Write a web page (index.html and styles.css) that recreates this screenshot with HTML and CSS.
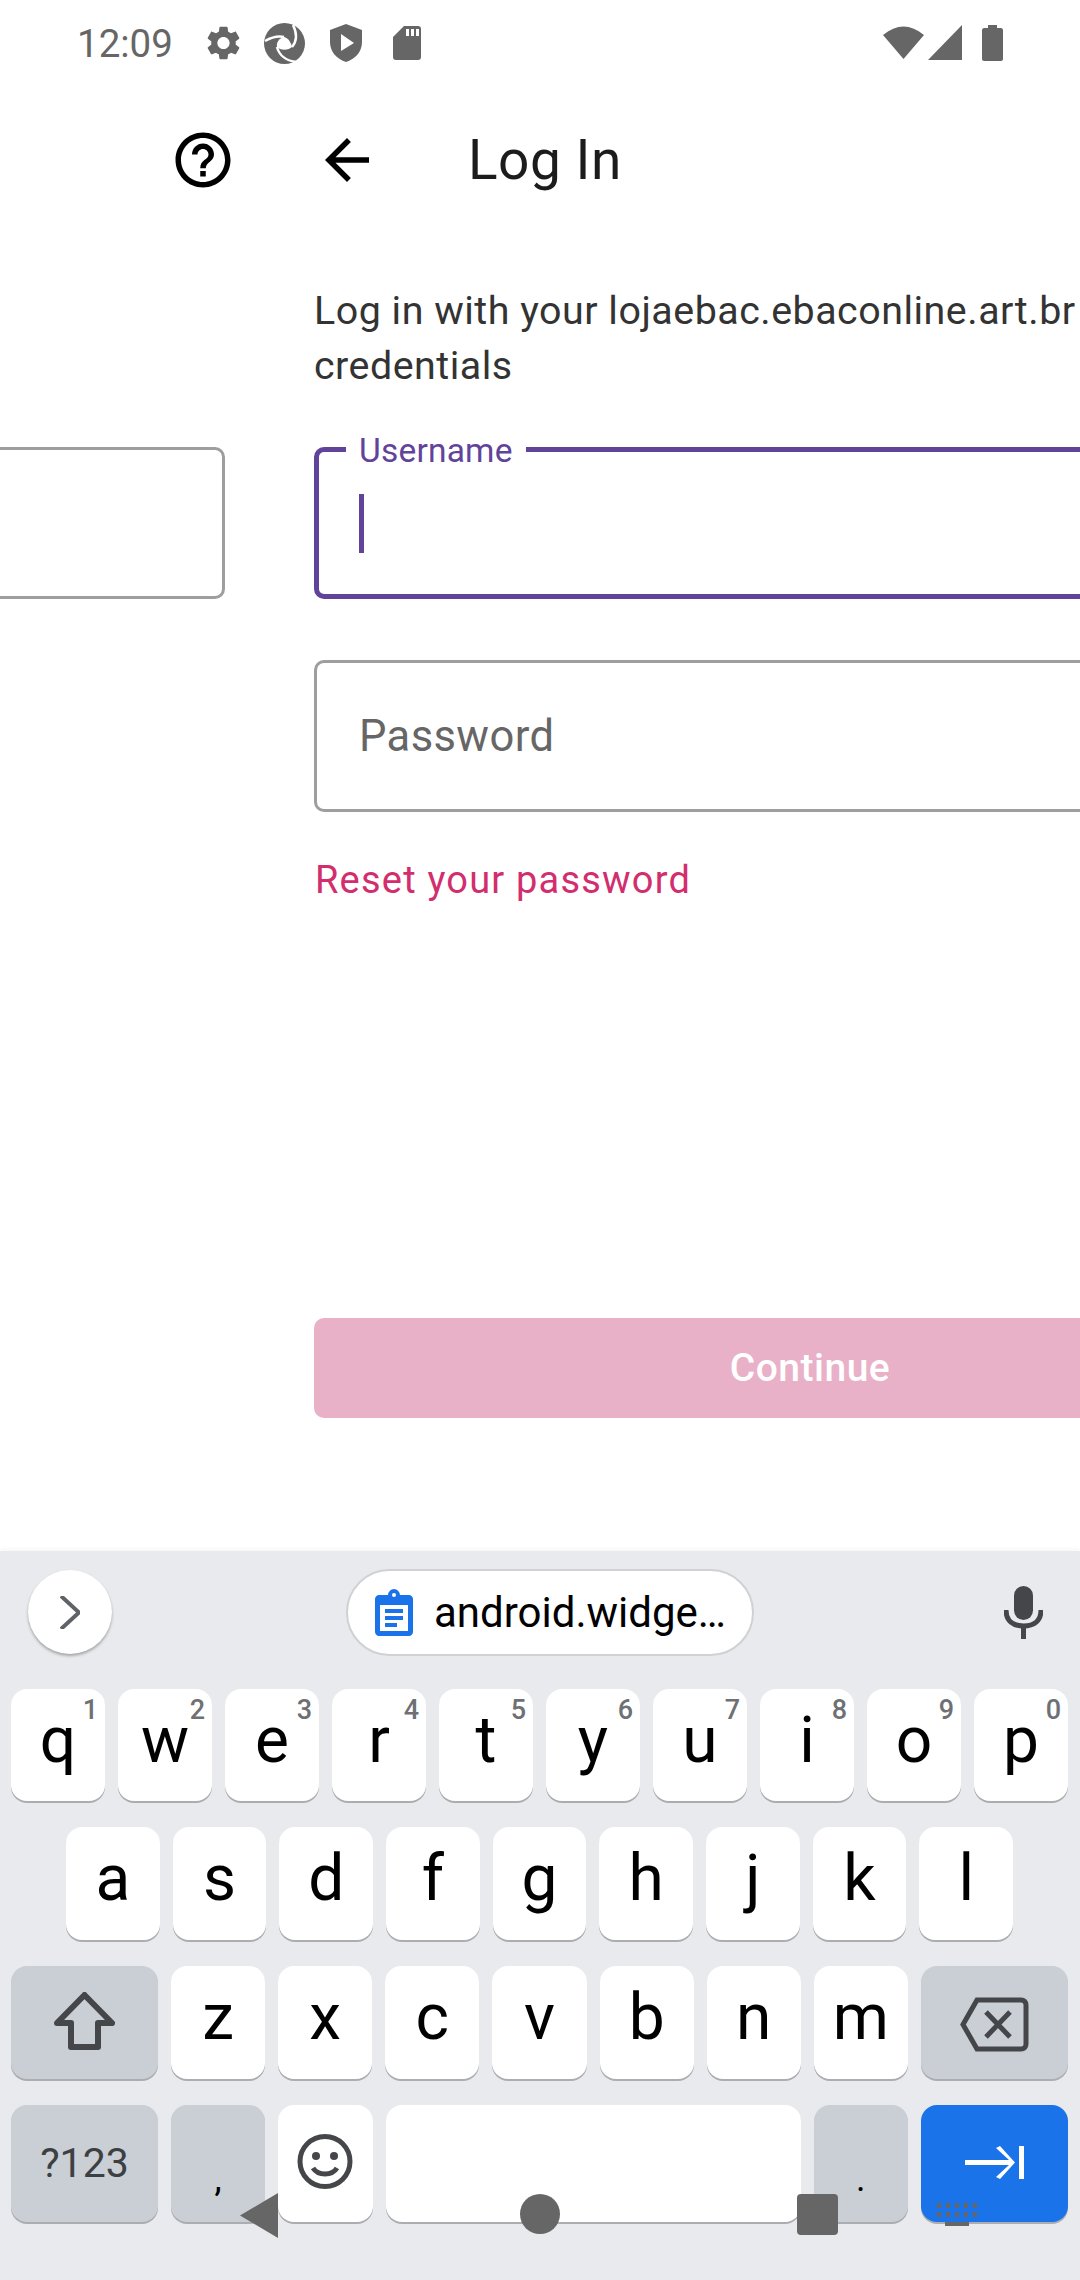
FILE: index.html
```html
<!DOCTYPE html>
<html lang="en">
<head>
  <meta charset="UTF-8" />
  <meta name="viewport" content="width=device-width, initial-scale=1.0"/>
  <title>Log In</title>
  <link rel="stylesheet" href="styles.css">
</head>
<body>
  <div class="status-bar">
    <span class="time">12:09</span>
    <svg class="st-gear" viewBox="2.5 2 19 20"><path d="M19.14 12.94c.04-.3.06-.61.06-.94 0-.32-.02-.64-.07-.94l2.03-1.58c.18-.14.23-.41.12-.61l-1.92-3.32c-.12-.22-.37-.29-.59-.22l-2.39.96c-.5-.38-1.03-.7-1.62-.94l-.36-2.54c-.04-.24-.24-.41-.48-.41h-3.84c-.24 0-.43.17-.47.41l-.36 2.54c-.59.24-1.13.57-1.62.94l-2.39-.96c-.22-.08-.47 0-.59.22L2.74 8.87c-.12.21-.08.47.12.61l2.03 1.58c-.05.3-.09.63-.09.94s.02.64.07.94l-2.03 1.58c-.18.14-.23.41-.12.61l1.92 3.32c.12.22.37.29.59.22l2.39-.96c.5.38 1.03.7 1.62.94l.36 2.54c.05.24.24.41.48.41h3.84c.24 0 .44-.17.47-.41l.36-2.54c.59-.24 1.13-.56 1.62-.94l2.39.96c.22.08.47 0 .59-.22l1.92-3.32c.12-.22.07-.47-.12-.61l-2.01-1.58zM12 15.6c-1.98 0-3.6-1.62-3.6-3.6s1.62-3.6 3.6-3.6 3.6 1.62 3.6 3.6-1.62 3.6-3.6 3.6z"/></svg>
    <svg class="st-swirl" viewBox="0 0 41 41">
      <circle cx="20.5" cy="20.5" r="20.5"/>
      <path class="cut" d="M1 18C8 14 15 13 20 14 M29 2C33 10 33 18 28 24 M13 24C15 32 22 38 33 39" />
      <path class="hole" d="M20 14C24 15 27 19 28 24C25 27 17 28 13 24C12 20 15 15 20 14Z"/>
    </svg>
    <svg class="st-shield" viewBox="0 0 32 38"><path d="M16 0L32 6V18C32 28 25 35 16 38C7 35 0 28 0 18V6Z"/><path class="play" d="M11 10L24 19L11 27Z"/></svg>
    <svg class="st-sd" viewBox="0 0 28 34"><path d="M11 0H25C27 0 28 1 28 3V31C28 33 27 34 25 34H3C1 34 0 33 0 31V11Z"/><path class="play" d="M13 3h3v7h-3zM18 3h3v7h-3zM23 3h3v7h-3z"/></svg>
    <span class="status-right">
      <svg class="st-wifi" viewBox="0 0 41 34"><path d="M0 10Q20.5 -7 41 10L20.5 34Z"/></svg>
      <svg class="st-signal" viewBox="0 0 34 35"><path d="M34 0V35H0Z"/></svg>
      <svg class="st-battery" viewBox="0 0 21 36"><path d="M6 0H15V3H19C20 3 21 4 21 5V34C21 35 20 36 19 36H2C1 36 0 35 0 34V5C0 4 1 3 2 3H6Z"/></svg>
    </span>
  </div>

  <div class="app-bar">
    <svg class="help" viewBox="0 0 24 24"><path d="M11 18h2v-2h-2v2zm1-16C6.48 2 2 6.48 2 12s4.48 10 10 10 10-4.48 10-10S17.52 2 12 2zm0 18c-4.41 0-8-3.59-8-8s3.59-8 8-8 8 3.59 8 8-3.59 8-8 8zm0-14c-2.21 0-4 1.79-4 4h2c0-1.1.9-2 2-2s2 .9 2 2c0 2-3 1.75-3 5h2c0-2.25 3-2.5 3-5 0-2.21-1.79-4-4-4z"/></svg>
    <svg class="back" viewBox="0 0 24 24"><path d="M20 11H7.83l5.59-5.59L12 4l-8 8 8 8 1.41-1.41L7.83 13H20v-2z"/></svg>
    <h1>Log In</h1>
  </div>

  <div class="login">
    <p class="intro">Log in with your lojaebac.ebaconline.art.br credentials</p>
    <div class="field field-prev"></div>
    <div class="field field-active">
      <span class="float-label">Username</span>
      <span class="cursor"></span>
    </div>
    <div class="field field-password">Password</div>
    <a class="reset">Reset your password</a>
    <button class="continue">Continue</button>
  </div>

  <div class="keyboard">
    <div class="suggestions">
      <span class="chevron">
        <svg viewBox="0 0 20 33"><path d="M1 0L19 16.500L1 33" /></svg>
      </span>
      <span class="chip">
        <svg class="clip" viewBox="0 0 38 47">
          <path d="M13 6C13 3 16 0 19 0S25 3 25 6H34C36 6 38 8 38 10V43C38 45 36 47 34 47H4C2 47 0 45 0 43V10C0 8 2 6 4 6Z"/>
          <path class="clip-in" d="M5 16H33V42H5Z"/>
          <path d="M10 20H28V24H10ZM10 27H28V31H10ZM10 34H22V38H10Z"/>
          <circle class="clip-in" cx="19" cy="6" r="2"/>
        </svg>
        <span class="chip-text">android.widge…</span>
      </span>
      <svg class="mic" viewBox="0 0 39 53">
        <rect x="10" y="0" width="19" height="34" rx="9.500"/>
        <path class="mic-arm" d="M2 24C2 35 9 40 19.500 40S37 35 37 24"/>
        <rect x="17" y="39" width="5" height="14"/>
      </svg>
    </div>

    <div class="row row-1">
      <span class="key"><b>1</b>q</span><span class="key"><b>2</b>w</span><span class="key"><b>3</b>e</span><span class="key"><b>4</b>r</span><span class="key"><b>5</b>t</span><span class="key"><b>6</b>y</span><span class="key"><b>7</b>u</span><span class="key"><b>8</b>i</span><span class="key"><b>9</b>o</span><span class="key"><b>0</b>p</span>
    </div>
    <div class="row row-2">
      <span class="key">a</span><span class="key">s</span><span class="key">d</span><span class="key">f</span><span class="key">g</span><span class="key">h</span><span class="key">j</span><span class="key">k</span><span class="key">l</span>
    </div>
    <div class="row row-3">
      <span class="key key-fn wide">
        <svg class="ico-shift" viewBox="0 0 61 58"><path d="M30.500 3L58 31H44V55H17V31H3Z"/></svg>
      </span>
      <span class="key">z</span><span class="key">x</span><span class="key">c</span><span class="key">v</span><span class="key">b</span><span class="key">n</span><span class="key">m</span>
      <span class="key key-fn wide">
        <svg class="ico-back" viewBox="0 0 69 55"><path class="line" d="M17 3H61C64 3 66 5 66 8V47C66 50 64 52 61 52H17L3 27.500Z"/><path class="line" d="M26 15L50 40M50 15L26 40"/></svg>
      </span>
    </div>
    <div class="row row-4">
      <span class="key key-fn wide sym">?123</span>
      <span class="key key-fn punct">,</span>
      <span class="key">
        <svg class="ico-emoji" viewBox="0 0 56 55"><ellipse class="line" cx="28" cy="27.500" rx="25" ry="25"/><circle cx="19" cy="22" r="4"/><circle cx="37" cy="22" r="4"/><path class="line" d="M16 34C21 42 35 42 40 34"/></svg>
      </span>
      <span class="key space"></span>
      <span class="key key-fn punct">.</span>
      <span class="key key-go wide">
        <svg class="ico-tab" viewBox="0 0 59 33"><path d="M0 14H44L31 2L35 0L50 16.500L35 33L31 31L44 19H0ZM54 0H59V33H54Z"/></svg>
      </span>
    </div>

    <!-- system nav buttons sit over the keys -->
    <svg class="nav nav-back" viewBox="0 0 38 45"><path d="M38 0V45L0 22.500Z"/></svg>
    <span class="nav nav-home"></span>
    <span class="nav nav-recent"></span>
    <svg class="nav nav-kbd" viewBox="0 0 40 23">
      <path d="M0 0h4v5h-4zM9 0h4v5h-4zM18 0h4v5h-4zM27 0h4v5h-4zM36 0h4v5h-4zM0 9h4v5h-4zM9 9h4v5h-4zM18 9h4v5h-4zM27 9h4v5h-4zM36 9h4v5h-4zM8 19h24v4h-24z"/>
    </svg>
  </div>
</body>
</html>
```

FILE: styles.css
```css
* { box-sizing: border-box; }
html, body { margin: 0; padding: 0; }
body { width: 1080px; height: 2280px; overflow: hidden; background: white; font-family: Roboto, "Noto Sans", sans-serif; display: flex; flex-direction: column; position: relative; }

.status-bar { height: 80px; flex: none; display: flex; align-items: flex-start; padding: 0 77px; position: relative; }
.status-bar svg { fill: #666; flex: none; }
.time { font-size: 38.500px; line-height: 44px; margin-top: 22px; color: #666; width: 95px; flex: none; }
.st-gear { width: 33px; height: 34px; margin: 26px 0 0 35px; }
.st-swirl { width: 41px; height: 41px; margin: 23px 0 0 24px; }
.st-swirl .cut { fill: none; stroke: white; stroke-width: 2.500; }
.st-swirl .hole { fill: white; }
.st-shield { width: 32px; height: 38px; margin: 24px 0 0 25px; }
.st-sd { width: 28px; height: 34px; margin: 26px 0 0 31px; }
.status-bar .play { fill: white; }
.status-right { margin-left: auto; display: flex; align-items: flex-start; margin-top: 25px; }
.st-wifi { width: 41px; height: 34px; }
.st-signal { width: 34px; height: 35px; margin-left: 4px; }
.st-battery { width: 21px; height: 36px; margin-left: 20px; }

.app-bar { height: 160px; flex: none; display: flex; align-items: center; padding-left: 170px; }
.help { width: 66px; height: 66px; flex: none; }
.back { width: 66px; height: 66px; flex: none; margin-left: 78px; }
.app-bar h1 { margin: 0 0 0 88px; font-size: 55px; font-weight: 400; letter-spacing: 0.5px; color: #1c1c1c; }

.login { flex: 1; min-height: 0; display: grid; grid-template-columns: 992px 992px; grid-auto-rows: min-content; column-gap: 89px; margin-left: -767px; padding-top: 43px; }
.login > * { grid-column: 2; }
.intro { margin: 0 0 54px; width: 800px; font-size: 39.400px; line-height: 55px; letter-spacing: 0.5px; color: #333; }
.field { height: 152px; border: 3px solid #9e9e9e; border-radius: 10px; position: relative; }
.field-prev { grid-column: 1; grid-row: 2; }
.field-active { grid-row: 2; border: 5px solid #62439a; }
.float-label { position: absolute; left: 27px; top: -19px; padding: 0 13px; background: white; font-size: 33.500px; line-height: 36px; color: #62439a; letter-spacing: 0.2px; }
.cursor { display: block; width: 5px; height: 59px; background: #62439a; margin: 42px 0 0 40px; }
.field-password { margin-top: 61px; padding-left: 42px; font-size: 43.500px; line-height: 148px; color: #666; letter-spacing: 0.4px; }
.reset { margin: 43px 0 0 1px; font-size: 38px; line-height: 50px; color: #d22e6e; letter-spacing: 1.2px; }
.continue { margin-top: 413px; height: 100px; width: 100%; border: none; border-radius: 10px; background: #e8b1c8; color: white; font-family: inherit; font-size: 39px; font-weight: 500; letter-spacing: 0.5px; padding: 0; }

.keyboard { height: 729px; flex: none; background: #e8eaed; box-shadow: 0 -2px 4px rgba(0,0,0,0.04); position: relative; padding: 17px 12px 0; }
.suggestions { height: 88px; display: flex; align-items: center; position: relative; margin-bottom: 33px; }
.chevron { width: 84px; height: 84px; border-radius: 50%; background: white; box-shadow: 0 2px 3px rgba(0,0,0,0.3); margin-left: 16px; display: flex; align-items: center; justify-content: center; flex: none; }
.chevron svg { width: 20px; height: 33px; fill: none; stroke: #5f6368; stroke-width: 4; }
.chip { width: 408px; height: 87px; margin-left: 234px; border-radius: 44px; background: white; border: 2px solid #d0d1d4; display: flex; align-items: center; padding-left: 27px; flex: none; }
.clip { width: 38px; height: 47px; fill: #1a73e8; flex: none; }
.clip-in { fill: white; }
.chip-text { margin-left: 21px; font-size: 42px; color: black; white-space: nowrap; }
.mic { width: 39px; height: 53px; margin-left: 250px; fill: #444649; flex: none; }
.mic-arm { fill: none; stroke: #444649; stroke-width: 5; }

.row { display: flex; gap: 13px; margin-bottom: 26px; height: 112px; margin-left: -1px; }
.row-2 { padding: 0 55px; height: 113px; }
.row-3 { height: 113px; }
.row-4 { height: 117px; margin-bottom: 0; }
.key { flex: 1; min-width: 0; background: white; border-radius: 16px; box-shadow: 0 2px 0 #acadb1; font-size: 64px; line-height: 104px; text-align: center; color: black; position: relative; }
.key b { position: absolute; top: 5px; right: 7px; font-size: 27px; line-height: 32px; font-weight: 500; color: #6e7074; }
.key svg { display: block; margin: 0 auto; }
.key-fn { background: #caced5; }
.wide { flex: none; width: 147px; }
.space { flex: none; width: 415px; }
.sym { font-size: 41px; line-height: 117px; color: #3c4043; }
.punct { font-size: 36px; line-height: 148px; color: black; }
.key-go { background: #1a73e8; }

.line { fill: none; stroke: #444649; stroke-width: 5; }
.ico-shift { width: 61px; height: 58px; fill: none; stroke: #444649; stroke-width: 6; stroke-linejoin: round; position: relative; top: 26px; }
.ico-back { width: 69px; height: 55px; position: relative; top: 31px; }
.ico-emoji { width: 56px; height: 55px; fill: #444649; position: relative; top: 29px; }
.ico-tab { width: 59px; height: 33px; fill: white; position: relative; top: 41px; }

.nav { position: absolute; }
svg.nav { fill: #666; }
.nav-back { left: 240px; top: 642px; width: 38px; height: 45px; }
.nav-home { left: 520px; top: 643px; width: 40px; height: 40px; border-radius: 50%; background: #666; }
.nav-recent { left: 797px; top: 643px; width: 41px; height: 41px; border-radius: 4px; background: #666; }
.nav-kbd { left: 937px; top: 652px; width: 40px; height: 23px; }
```
